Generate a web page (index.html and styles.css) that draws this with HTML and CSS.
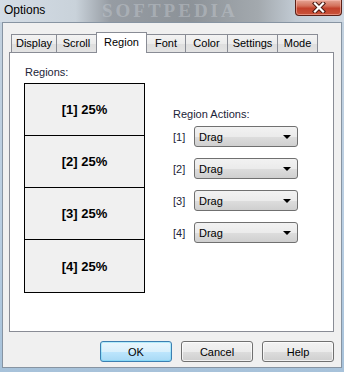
FILE: index.html
```html
<!DOCTYPE html>
<html lang="en">
<head>
  <meta charset="UTF-8" />
  <title>Options</title>
  <link rel="stylesheet" href="styles.css">
</head>
<body>
  <div class="window">

    <!-- Title bar -->
    <div class="titlebar">
      <span class="title">Options</span>
      <span class="watermark">SOFTPEDIA</span>
      <button class="close" aria-label="Close">
        <svg width="16" height="11" viewBox="0 0 16 11">
          <path d="M4 1.5 L12 9.5 M12 1.5 L4 9.5" stroke="#4a1a12" stroke-width="4.2" stroke-linecap="square"/>
          <path d="M4 1.5 L12 9.5 M12 1.5 L4 9.5" stroke="#fff" stroke-width="2.2" stroke-linecap="square"/>
        </svg>
      </button>
    </div>

    <div class="client">
      <!-- Tabs -->
      <div class="tabs">
        <div class="tab w-display">Display</div>
        <div class="tab w-scroll">Scroll</div>
        <div class="tab active w-region">Region</div>
        <div class="tab w-font">Font</div>
        <div class="tab w-color">Color</div>
        <div class="tab w-settings">Settings</div>
        <div class="tab w-mode">Mode</div>
      </div>

      <!-- Region page -->
      <div class="panel">
        <div class="regions-col">
          <div class="label">Regions:</div>
          <div class="regions">
            <div class="region">[1] 25%</div>
            <div class="region">[2] 25%</div>
            <div class="region">[3] 25%</div>
            <div class="region">[4] 25%</div>
          </div>
        </div>

        <div class="actions-col">
          <div class="label">Region Actions:</div>
          <div class="action-rows">
            <div class="action-row">
              <span class="num">[1]</span>
              <div class="combo"><span>Drag</span><i class="arrow"></i></div>
            </div>
            <div class="action-row">
              <span class="num">[2]</span>
              <div class="combo"><span>Drag</span><i class="arrow"></i></div>
            </div>
            <div class="action-row">
              <span class="num">[3]</span>
              <div class="combo"><span>Drag</span><i class="arrow"></i></div>
            </div>
            <div class="action-row">
              <span class="num">[4]</span>
              <div class="combo"><span>Drag</span><i class="arrow"></i></div>
            </div>
          </div>
        </div>
      </div>

      <!-- Dialog buttons -->
      <div class="buttons">
        <button class="btn default">OK</button>
        <button class="btn">Cancel</button>
        <button class="btn">Help</button>
      </div>
    </div>
  </div>
</body>
</html>
```

FILE: styles.css
```css
/* Base */
body {
  margin: 0;
  font-family: "Liberation Sans", Arial, sans-serif;
  font-size: 11px;
  color: #000;
  overflow: hidden;
}

.window {
  width: 344px;
  height: 372px;
  box-sizing: border-box;
  padding: 0 2px 4px 2px;
  display: flex;
  flex-direction: column;
  background: linear-gradient(180deg, #c3d1de 0, #b9cee2 60%, #a7c2da 100%);
}

/* Title bar */
.titlebar {
  position: relative;
  height: 22px;
  margin: 0 -2px;
  display: flex;
  justify-content: space-between;
  align-items: flex-start;
  background: linear-gradient(90deg, #d4dde6 0, #c9d2da 22%, #969ca3 32%, #8c9298 55%, #a3a9ae 75%, #c2cbd4 86%, #cfd9e3 100%);
}
.title {
  font-size: 12px;
  line-height: 14px;
  padding: 3px 0 0 4px;
  color: #000;
}
.watermark {
  position: absolute;
  left: 102px;
  top: 1px;
  font-family: "Liberation Serif", serif;
  font-weight: bold;
  font-size: 19px;
  line-height: 20px;
  letter-spacing: 3px;
  color: rgba(205, 210, 216, 0.4);
}
.close {
  width: 47px;
  height: 16px;
  margin-right: 2px;
  padding: 0;
  border: 1px solid #5b2016;
  border-top: none;
  border-radius: 0 0 4px 4px;
  background: linear-gradient(180deg, #e5a595 0, #d3705a 40%, #c2412b 55%, #c9533a 100%);
  box-shadow: inset 0 0 0 1px rgba(255, 200, 190, 0.5);
  display: flex;
  align-items: center;
  justify-content: center;
}

/* Client area */
.client {
  flex: 1;
  border: 1px solid #8794a2;
  background: #f0f0f0;
  padding: 9px 7px 5px 6px;
}

/* Tabs */
.tabs {
  position: relative;
  z-index: 1;
  display: flex;
  align-items: flex-end;
  height: 20px;
  padding-left: 2px;
}
.tab {
  box-sizing: border-box;
  height: 18px;
  margin-left: -1px;
  border: 1px solid #898c95;
  border-bottom: none;
  background: linear-gradient(180deg, #f3f3f3 0, #ebebeb 50%, #dedede 51%, #e3e3e3 100%);
  line-height: 14px;
  padding-top: 1px;
  text-align: center;
}
.tab.active {
  height: 21px;
  margin-bottom: -1px;
  background: #fff;
  padding-top: 2px;
}
.w-display { width: 46px; margin-left: 0; }
.w-scroll { width: 41px; }
.w-region { width: 51px; }
.w-font { width: 40px; }
.w-color { width: 43px; }
.w-settings { width: 51px; }
.w-mode { width: 41px; }

/* Panel */
.panel {
  box-sizing: border-box;
  height: 280px;
  border: 1px solid #898c95;
  background: #fff;
  display: flex;
  padding: 12px 0 0 14px;
}
.label {
  line-height: 14px;
  color: #1b2438;
  padding-left: 1px;
}

.regions {
  margin-top: 4px;
  width: 121px;
  border: 1px solid #000;
  box-sizing: border-box;
}
.region {
  height: 51px;
  background: #f0f0f0;
  border-top: 1px solid #000;
  display: flex;
  align-items: center;
  justify-content: center;
  font-weight: bold;
  font-size: 13px;
}
.region:first-child {
  border-top: none;
}
.region:last-child {
  height: 52px;
}

/* Region actions */
.actions-col {
  margin: 42px 0 0 27px;
}
.action-rows {
  display: flex;
  flex-direction: column;
  gap: 11px;
  margin-top: 5px;
}
.action-row {
  display: flex;
  align-items: center;
}
.num {
  width: 21px;
  padding-left: 1px;
  color: #1b2438;
}
.combo {
  box-sizing: border-box;
  width: 104px;
  height: 21px;
  border: 1px solid #707070;
  border-radius: 3px;
  background: linear-gradient(180deg, #f2f2f2 0, #ebebeb 50%, #dddddd 51%, #cfcfcf 100%);
  display: flex;
  align-items: center;
  justify-content: space-between;
  padding: 0 6px 0 4px;
}
.arrow {
  width: 0;
  height: 0;
  border-left: 4px solid transparent;
  border-right: 4px solid transparent;
  border-top: 4px solid #000;
}

/* Buttons */
.buttons {
  display: flex;
  justify-content: flex-end;
  gap: 9px;
  margin-top: 9px;
}
.btn {
  box-sizing: border-box;
  width: 72px;
  height: 21px;
  padding: 0;
  font-family: inherit;
  font-size: 11px;
  color: #000;
  border: 1px solid #707070;
  border-radius: 3px;
  background: linear-gradient(180deg, #f2f2f2 0, #ebebeb 50%, #dddddd 51%, #cfcfcf 100%);
  box-shadow: inset 0 0 0 1px rgba(255, 255, 255, 0.7);
}
.btn.default {
  border-color: #3c7fb1;
  background: linear-gradient(180deg, #eaf6fd 0, #d9f0fc 50%, #bee6fd 51%, #a7d9f5 100%);
  box-shadow: inset 0 0 0 1px #48d7fa55;
}
```
